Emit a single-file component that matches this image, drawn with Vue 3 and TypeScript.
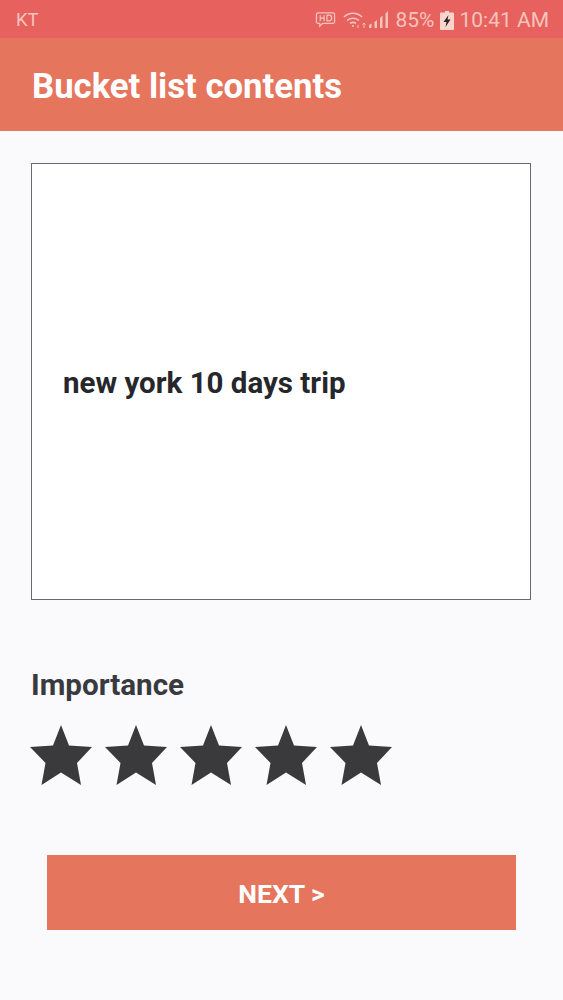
<script setup lang="ts">
const stars: number[] = [1, 2, 3, 4, 5]
</script>

<template>
  <div class="screen">
    <div class="status">
      <span class="carrier">KT</span>
      <div class="status-right">
        <svg class="hd" width="21" height="18" viewBox="0 0 22 18" fill="none" stroke="#f6c4bd" stroke-width="1.3">
          <path d="M3 1.500h16a1.500 1.500 0 0 1 1.500 1.500v8a1.500 1.500 0 0 1-1.500 1.500H8l-3 3v-3H3A1.500 1.500 0 0 1 1.500 11V3A1.500 1.500 0 0 1 3 1.500z" />
          <path d="M5.500 4v6M5.500 7h4M9.500 4v6M12.500 4v6h2a3 3 0 0 0 0-6z" />
        </svg>
        <svg class="wifi" width="24" height="18" viewBox="0 0 24 18" fill="none" stroke="#f6c4bd" stroke-width="1.600">
          <path d="M1 6c5-5 13-5 18 0M4 9.500c3.500-3 8.500-3 12 0M7 12.500c2-1.500 4-1.500 6 0" />
          <circle cx="10" cy="15" r="1" fill="#f6c4bd" stroke="none" />
          <path d="M15 14v3M21 12v5M19.500 13.500l1.500-1.500 1.500 1.500" stroke-width="1" />
        </svg>
        <svg class="signal" width="19" height="18" viewBox="0 0 19 18" fill="#f6c4bd">
          <path d="M0 14l2.500-1.500V17H0zM5.500 11l2.500-2V17H5.500zM11 7l2.500-2.500V17H11zM16.500 2.500L19 0V17h-2.500z" />
        </svg>
        <span class="pct">85%</span>
        <svg class="batt" width="14" height="19" viewBox="0 0 14 19">
          <path d="M5 0h4v1.500h4a1 1 0 0 1 1 1V18a1 1 0 0 1-1 1H1a1 1 0 0 1-1-1V2.500a1 1 0 0 1 1-1h4z" fill="#f9d5ce" />
          <path d="M8.500 4L3.500 11h3L5.500 16 10.500 8.500h-3z" fill="#2b2523" />
        </svg>
        <span class="time">10:41 AM</span>
      </div>
    </div>
    <header class="appbar">Bucket list contents</header>
    <main class="content">
      <div class="box">
        <span class="box-text">new york 10 days trip</span>
      </div>
      <h2 class="label">Importance</h2>
      <div class="stars">
        <svg v-for="s in stars" :key="s" class="star" width="62" height="60" viewBox="0 0 62 60">
          <path d="M31 0L39 20.500 62 22 47 38 51 60 31 47.500 11.500 60 15.500 38 0 22 23 20.500z" fill="#3a3a3d" />
        </svg>
      </div>
      <button class="next" type="button">NEXT &gt;</button>
    </main>
  </div>
</template>

<style>
html, body { margin: 0; padding: 0; background: #fafafc; }
</style>

<style scoped>
.screen {
  width: 563px;
  height: 1000px;
  overflow: hidden;
  background: #fafafc;
  font-family: Roboto, "Liberation Sans", sans-serif;
  display: flex;
  flex-direction: column;
}
.status {
  height: 38px;
  background: #e7615e;
  color: #f6c4bd;
  display: flex;
  align-items: center;
  justify-content: space-between;
  padding: 2px 14px 0 16px;
  box-sizing: border-box;
  font-size: 18.500px;
}
.status-right {
  display: flex;
  align-items: center;
}
.wifi { margin-left: 7px; }
.signal { margin-left: 2px; }
.pct { margin-left: 7px; font-size: 21px; }
.batt { margin-left: 6px; }
.time { margin-left: 5px; font-size: 21px; }
.appbar {
  height: 93px;
  background: #e6755e;
  color: #fff;
  font-size: 34.700px;
  font-weight: 700;
  line-height: 96px;
  padding-left: 32px;
  box-sizing: border-box;
}
.content {
  flex: 1;
  padding: 32px 32px 0 31px;
  display: flex;
  flex-direction: column;
}
.box {
  width: 500px;
  height: 437px;
  box-sizing: border-box;
  border: 1px solid #666a70;
  background: #fff;
  display: flex;
  align-items: center;
  padding: 2px 0 0 31px;
}
.box-text {
  font-size: 29.500px;
  font-weight: 700;
  color: #26272b;
}
.label {
  margin: 67px 0 0;
  font-size: 29.600px;
  font-weight: 700;
  line-height: 36px;
  color: #393a3e;
}
.stars {
  display: flex;
  gap: 13px;
  margin: 22px 0 0 -1px;
}
.star { display: block; }
.next {
  width: 469px;
  height: 75px;
  margin: 70px 0 0 16px;
  border: 0;
  background: #e6755e;
  color: #fff;
  font-family: inherit;
  font-size: 26.500px;
  font-weight: 700;
  padding: 2px 0 0;
}
</style>
